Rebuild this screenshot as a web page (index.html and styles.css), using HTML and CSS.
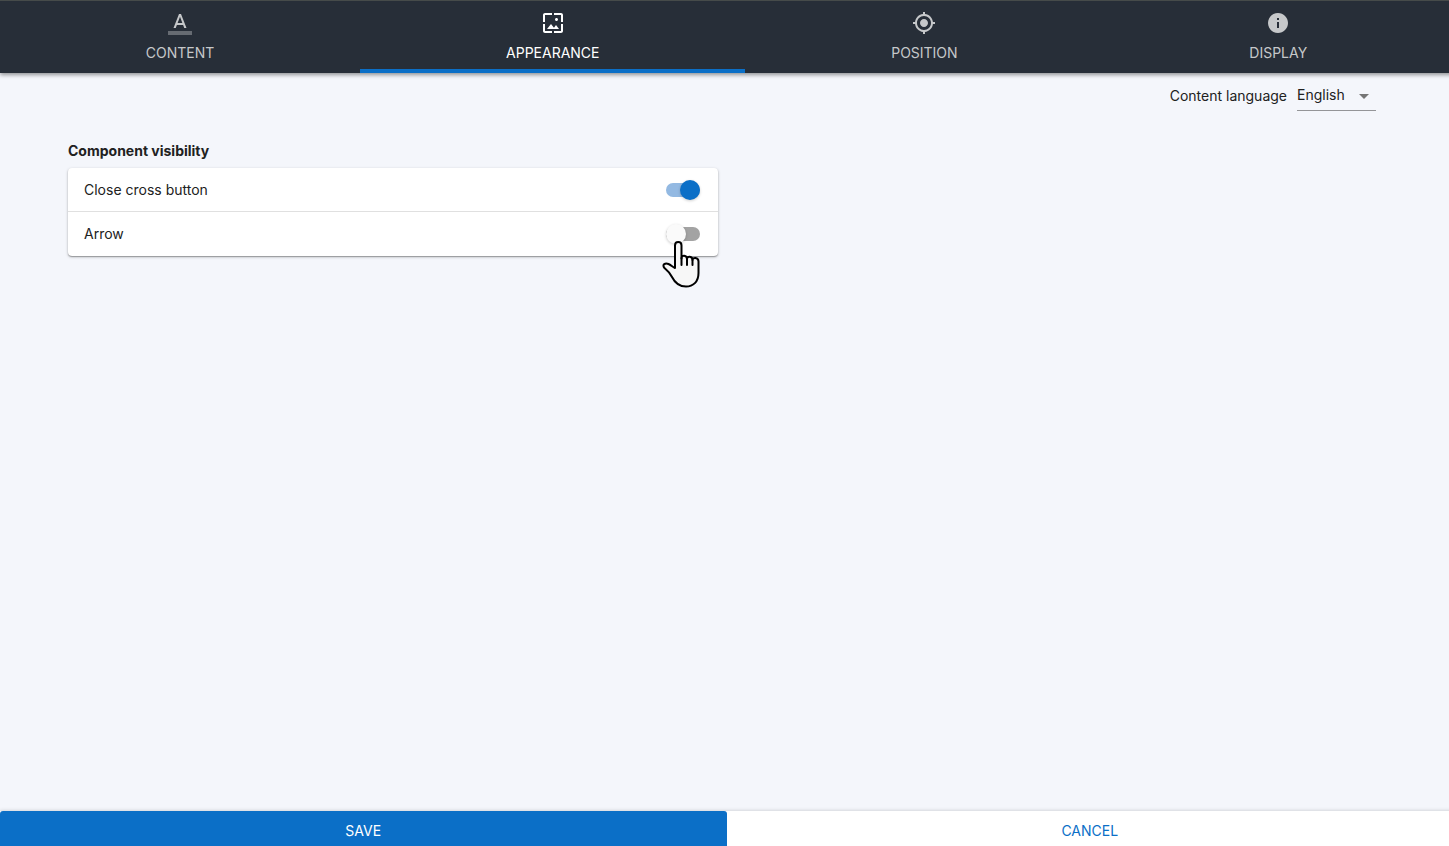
FILE: index.html
```html
<!DOCTYPE html>
<html lang="en">
<head>
    <meta charset="UTF-8">
    <meta name="viewport" content="width=device-width, initial-scale=1.0">
    <title>Appearance</title>
    <link rel="stylesheet" href="styles.css">
</head>
<body>
    <nav class="tabs">
        <button class="tab" type="button">
            <svg class="tab-icon" viewBox="0 0 24 24">
                <path fill-opacity=".4" d="M0 20h24v4H0z"/>
                <path d="M11 3L5.500 17h2.250l1.120-3h6.250l1.120 3h2.250L13 3h-2zm-1.380 9L12 5.670 14.380 12H9.620z"/>
            </svg>
            <span>CONTENT</span>
        </button>
        <button class="tab active" type="button">
            <svg class="tab-icon" viewBox="0 0 24 24">
                <path d="M4 4h7V2H4c-1.100 0-2 .9-2 2v7h2V4zm6 9l-4 5h12l-3-4-2.030 2.710L10 13zm7-4.500c0-.83-.67-1.500-1.500-1.500S14 7.670 14 8.500s.67 1.500 1.500 1.500S17 9.330 17 8.500zM20 2h-7v2h7v7h2V4c0-1.100-.9-2-2-2zm0 18h-7v2h7c1.100 0 2-.9 2-2v-7h-2v7zM4 13H2v7c0 1.100.9 2 2 2h7v-2H4v-7z"/>
            </svg>
            <span>APPEARANCE</span>
        </button>
        <button class="tab" type="button">
            <svg class="tab-icon" viewBox="0 0 24 24">
                <path d="M12 8c-2.210 0-4 1.790-4 4s1.790 4 4 4 4-1.790 4-4-1.790-4-4-4zm8.940 3c-.46-4.170-3.770-7.480-7.940-7.940V1h-2v2.060C6.830 3.520 3.520 6.830 3.060 11H1v2h2.060c.46 4.170 3.770 7.480 7.940 7.940V23h2v-2.060c4.170-.46 7.480-3.770 7.940-7.940H23v-2h-2.060zM12 19c-3.870 0-7-3.130-7-7s3.130-7 7-7 7 3.130 7 7-3.130 7-7 7z"/>
            </svg>
            <span>POSITION</span>
        </button>
        <button class="tab" type="button">
            <svg class="tab-icon" viewBox="0 0 24 24">
                <path d="M12 2C6.480 2 2 6.480 2 12s4.480 10 10 10 10-4.480 10-10S17.520 2 12 2zm1 15h-2v-6h2v6zm0-8h-2V7h2v2z"/>
            </svg>
            <span>DISPLAY</span>
        </button>
    </nav>

    <main class="content">
        <div class="language">
            <label for="language">Content language</label>
            <div class="select-box">
                <select id="language" name="language">
                    <option>English</option>
                    <option>French</option>
                    <option>German</option>
                </select>
                <svg class="select-arrow" viewBox="0 0 24 24"><path d="M7 10l5 5 5-5z"/></svg>
            </div>
        </div>

        <section class="settings">
            <h2>Component visibility</h2>
            <div class="card">
                <div class="row">
                    <label for="close-button">Close cross button</label>
                    <input class="switch" id="close-button" type="checkbox" checked>
                </div>
                <div class="row">
                    <label for="arrow">Arrow</label>
                    <input class="switch" id="arrow" type="checkbox">
                </div>
                <!-- pointer over the arrow switch -->
                <svg class="pointer" viewBox="0 0 40 50">
                    <path d="M14 29V6.500c0-4.600 6.500-4.600 6.500 0v13c0-4 5.500-3.500 5.500 .5 0-3.500 5.500-3 5.500 1 0-3 6-3 6 1.500v11.500C37.500 43 32 47.500 25 47.500c-6.500 0-11-3.500-14-9.500C9 34 6.500 31.500 3.500 29c-3-3.500 1-5.500 4-4 2.500 1 4 3 6.500 4z"/>
                    <path d="M20.500 19v7M26 20v6M31.500 21v5"/>
                </svg>
            </div>
        </section>
    </main>

    <footer class="actions">
        <button class="action save" type="button">SAVE</button>
        <button class="action cancel" type="button">CANCEL</button>
    </footer>
</body>
</html>
```
FILE: styles.css
```css
* {
    box-sizing: border-box;
}

body {
    margin: 0;
    min-height: 100vh;
    display: flex;
    flex-direction: column;
    overflow-x: hidden;
    font-family: Inter, "Liberation Sans", sans-serif;
    font-size: 14px;
    line-height: 20px;
    color: #212121;
    background-color: #f4f6fb;
}

button, select {
    font: inherit;
    border: none;
    border-radius: 0;
    cursor: pointer;
}

/* Both bars bleed past the right edge */
.tabs, .actions {
    display: flex;
    margin-right: -4px;
}

/* Tabs */
.tabs {
    border-top: 1px solid #464b4a;
    background-color: #272e38;
    box-shadow: 0 2px 4px rgba(0, 0, 0, 0.4);
}

.tab {
    flex: 1 1 auto;
    display: flex;
    flex-direction: column;
    align-items: center;
    gap: 8px;
    padding: 10px 0 6px;
    border-bottom: 4px solid transparent;
    background: none;
    color: #c6c8ca;
}

.tab.active {
    color: #fff;
    border-bottom-color: #0b6fc7;
}

.tab-icon {
    width: 24px;
    height: 24px;
    fill: currentColor;
}

/* Content */
.content {
    flex: 1;
    padding: 8px 73px 24px 68px;
}

.language {
    display: flex;
    justify-content: flex-end;
    align-items: center;
    gap: 10px;
}

.select-box {
    display: grid;
    align-items: center;
    width: 79px;
    height: 30px;
    border-bottom: 1px solid #949598;
}

.select-box select {
    grid-area: 1 / 1;
    appearance: none;
    width: 100%;
    padding: 0 0 2px;
    background: none;
    color: #212121;
}

.select-arrow {
    grid-area: 1 / 1;
    justify-self: end;
    width: 24px;
    height: 24px;
    fill: #757575;
    pointer-events: none;
}

.settings {
    width: 50%;
    max-width: 650px;
    margin-top: 30px;
}

.settings h2 {
    margin: 0 0 7px;
    font-size: 14px;
    font-weight: 700;
}

.card {
    position: relative;
    background-color: #fff;
    border-radius: 4px;
    box-shadow: 0 1px 3px rgba(0, 0, 0, 0.25), 0 1px 1px rgba(0, 0, 0, 0.25);
}

.row {
    display: flex;
    align-items: center;
    justify-content: space-between;
    height: 44px;
    padding: 0 18px 0 16px;
}

.row:first-child {
    border-bottom: 1px solid #e0e0e0;
}

.switch {
    appearance: none;
    display: flex;
    align-items: center;
    width: 34px;
    height: 14px;
    margin: 0;
    border-radius: 7px;
    background-color: #a3a3a3;
    cursor: pointer;
}

.switch::before {
    content: "";
    width: 20px;
    height: 20px;
    border-radius: 50%;
    background-color: #fafafa;
    box-shadow: 0 1px 3px rgba(0, 0, 0, 0.2);
}

.switch:checked {
    justify-content: flex-end;
    background-color: #93b9e2;
}

.switch:checked::before {
    background-color: #0b6fc7;
}

.pointer {
    position: absolute;
    right: 17px;
    top: 71px;
    width: 40px;
    height: 50px;
    fill: #f7f7f7;
    stroke: #000;
    stroke-width: 2;
    stroke-linecap: round;
    stroke-linejoin: round;
    pointer-events: none;
}

/* Footer */
.actions {
    background-color: #fff;
    box-shadow: 0 0 4px rgba(0, 0, 0, 0.2);
}

.action {
    flex: 1;
    padding: 10px 0 5px;
}

.save {
    border-radius: 3px 3px 0 0;
    background-color: #0b6fc7;
    color: #fff;
}

.cancel {
    background-color: #fff;
    color: #0b6fc7;
}
```
